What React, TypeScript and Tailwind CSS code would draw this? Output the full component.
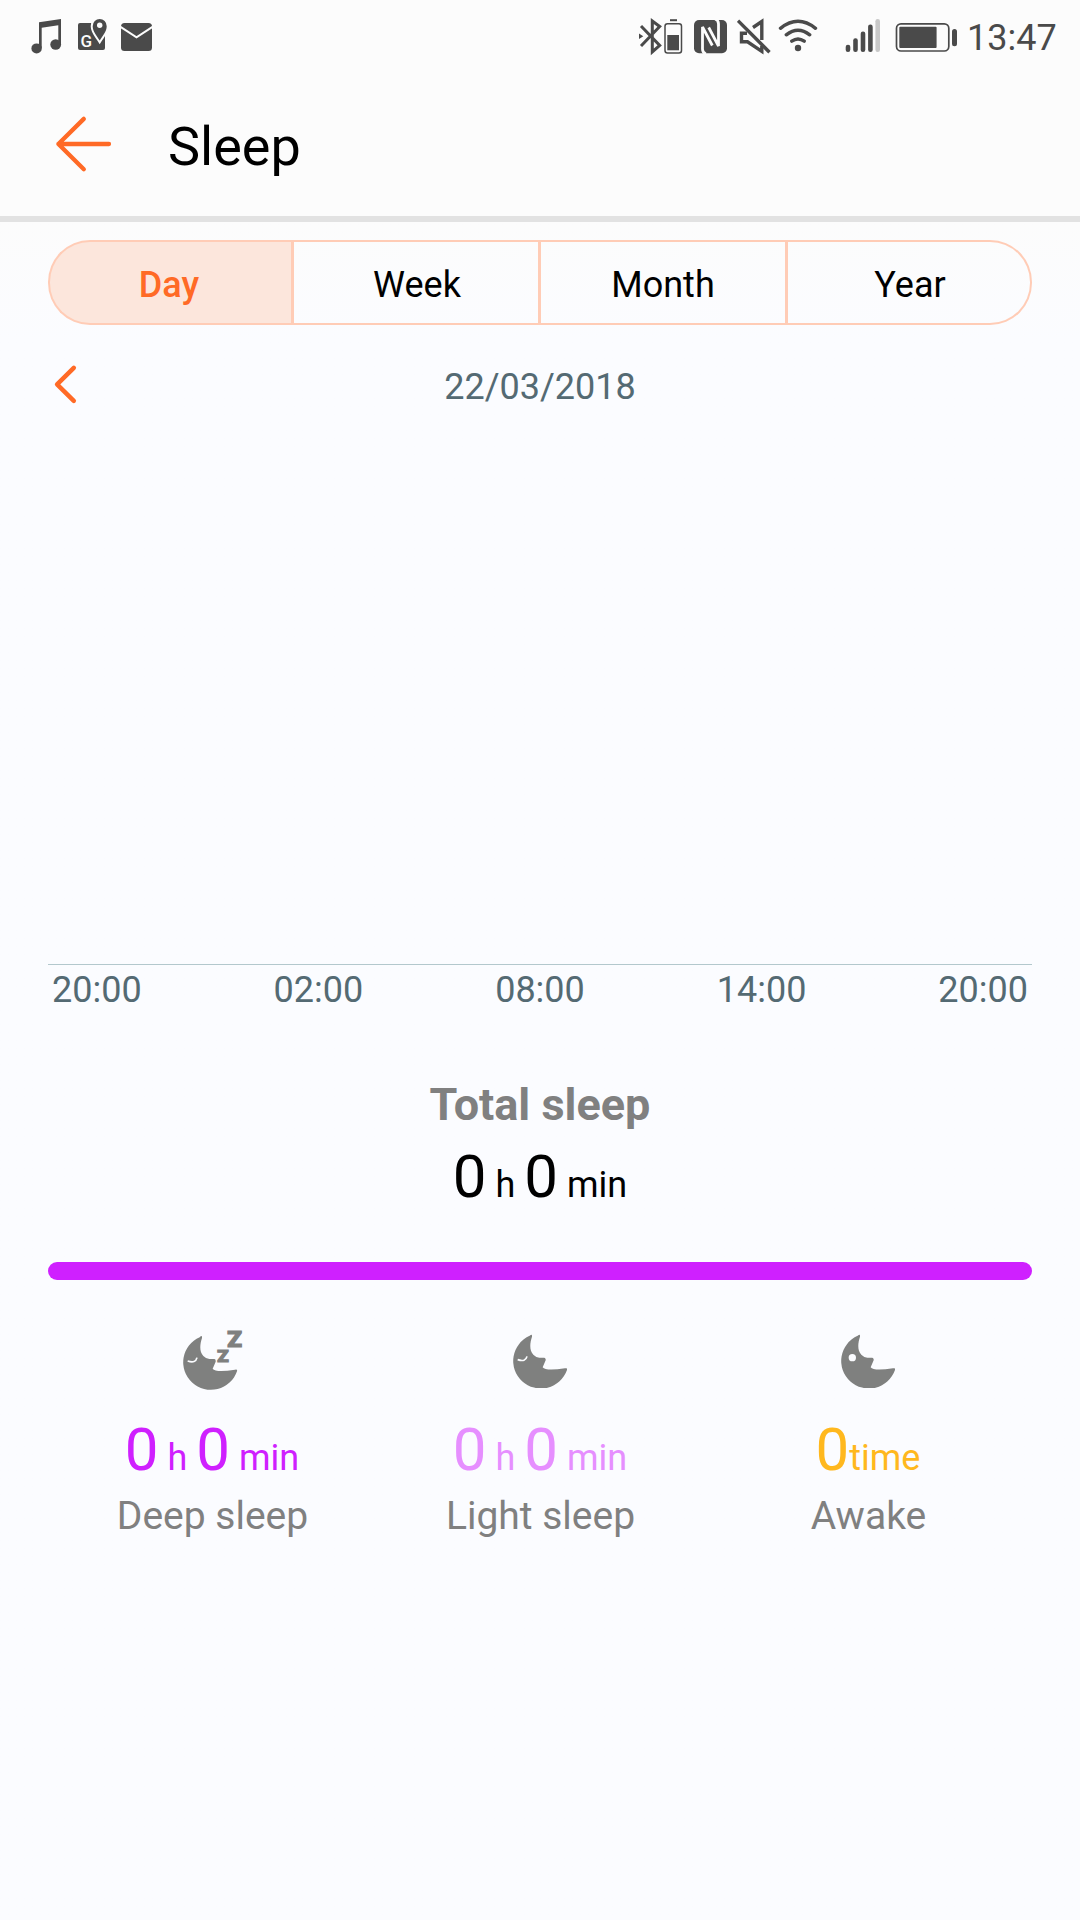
import type { ReactNode } from 'react'
import clsx from 'clsx'

const tabs = ['Day', 'Week', 'Month', 'Year']
const hours = ['20:00', '02:00', '08:00', '14:00', '20:00']

function MusicIcon() {
  return (
    <svg width="34" height="43" viewBox="30 16 34 43" fill="#4a4a4a">
      <path d="M39 22.3 61 19v26h-2.7V25.2L41.7 27.7V48H39z" />
      <ellipse cx="36.6" cy="48.4" rx="5.2" ry="5" />
      <ellipse cx="55.7" cy="44.5" rx="5.4" ry="5.2" />
    </svg>
  )
}

function MapsIcon() {
  return (
    <svg width="32" height="43" viewBox="76 16 32 43" fill="#4a4a4a">
      <rect x="78" y="23" width="27" height="27" rx="2" />
      <path
        d="M99.7 40.5c-2.6-4.3-7-8.8-7-14.3a7 7.2 0 0 1 14 0c0 5.5-4.4 10-7 14.3z"
        stroke="#fcfcfc"
        strokeWidth="4"
        paintOrder="stroke"
      />
      <circle cx="99.7" cy="25.3" r="2.7" fill="#fcfcfc" />
      <text x="80.5" y="47" fontSize="17" fontWeight="500" fill="#fcfcfc" fontFamily="Roboto, sans-serif">
        G
      </text>
    </svg>
  )
}

function MailIcon() {
  return (
    <svg width="34" height="43" viewBox="120 16 34 43">
      <rect x="121" y="23" width="31" height="28" rx="3.5" fill="#4a4a4a" />
      <path d="m120.5 26.8 16 10.5 16-10.5" fill="none" stroke="#fcfcfc" strokeWidth="2" />
    </svg>
  )
}

function BluetoothIcon() {
  return (
    <svg width="49" height="43" viewBox="638 16 49 43" fill="none" stroke="#4a4a4a" strokeWidth="3">
      <path d="m641 26 18.700 19.500-7.400 6.500V21l7.400 5.500L641 46" />
      <path d="m639 33.500 4.300 2.800-4.300 2.700z" fill="#4a4a4a" stroke="none" />
      <rect x="665" y="23.7" width="16.5" height="29.3" rx="2.5" strokeWidth="1.5" />
      <path d="M670 20.200h7" strokeWidth="2" />
      <path d="M667.300 35H679v15.300h-11.700z" fill="#4a4a4a" stroke="none" />
    </svg>
  )
}

function NfcIcon() {
  return (
    <svg width="38" height="43" viewBox="693 16 38 43">
      <rect x="694" y="20" width="33" height="33.3" rx="5" fill="#4a4a4a" />
      <path
        d="M706 54q-3.500-1-3.500-5V27l9.800 18.500M715 19q3.500 1 3.500 5v22l-9.800-18.500"
        fill="none"
        stroke="#fcfcfc"
        strokeWidth="2.8"
      />
    </svg>
  )
}

function MuteIcon() {
  return (
    <svg width="34" height="43" viewBox="737 16 34 43" fill="none" stroke="#4a4a4a" strokeWidth="3.4">
      <path d="m738 20.700 31.500 31.600" />
      <path d="M747 33.300h-5.500v8.500h6l14.300 9.500V46M753 27.500l8.800-6v18.500" />
    </svg>
  )
}

function WifiIcon() {
  return (
    <svg width="42" height="43" viewBox="777 16 42 43" fill="none" stroke="#4a4a4a" strokeWidth="3.4" strokeLinecap="round">
      <path d="M780.500 28.300q17.500-14 35 0M786.300 34.800q11.700-9.300 23.400 0M791.800 41.200q6.200-4.600 12.400 0" />
      <circle cx="798" cy="48" r="3.2" fill="#4a4a4a" stroke="none" />
    </svg>
  )
}

function SignalIcon() {
  return (
    <svg width="36" height="43" viewBox="845 16 36 43" fill="#4a4a4a">
      <rect x="845.7" y="44.7" width="4.6" height="7.3" rx="2.2" />
      <rect x="853.2" y="38.3" width="4.6" height="13.7" rx="2.2" />
      <rect x="860.7" y="31.5" width="4.6" height="20.5" rx="2.2" />
      <rect x="868.1" y="24.5" width="4.6" height="27.5" rx="2.2" />
      <rect x="875.4" y="19" width="4.6" height="33" rx="2.2" fill="#c8c8c8" />
    </svg>
  )
}

function BatteryIcon() {
  return (
    <svg width="64" height="43" viewBox="895 16 64 43" fill="#4a4a4a">
      <rect x="896.5" y="23.8" width="52.3" height="27.2" rx="4.5" fill="none" stroke="#4a4a4a" strokeWidth="1.7" />
      <rect x="899.3" y="26.7" width="37.3" height="21.3" rx="1" />
      <rect x="952" y="29" width="5" height="17.3" rx="2.5" />
    </svg>
  )
}

const MOON =
  'M50 5.500Q58-2 57 8C51 26 48 48 61 62Q70 71 79 71L94 71Q99 72 98 79L89 100Q98 112 156 103Q164 101 162 108A83 82.500 0 1 1 50 5.500Z'

function Moon({ face }: { face: 'deep' | 'light' | 'awake' }) {
  const deep = face === 'deep'
  return (
    <svg
      className={clsx('shrink-0', deep && 'ml-0.5')}
      width={deep ? 60 : 54}
      height={deep ? 70 : 54.67}
      viewBox={deep ? '0 -28 180 210' : '0 0 162 164'}
      fill="#7f807f"
    >
      <path d={MOON} />
      {face === 'awake' ? (
        <circle cx="34" cy="71" r="11" fill="#fbfcff" />
      ) : (
        <path d="M14 77Q38 85 42 67" fill="none" stroke="#fbfcff" strokeWidth="5" />
      )}
      {deep && (
        <g fontFamily="Roboto, sans-serif" fontWeight="900" stroke="#7f807f" strokeWidth="3.5">
          <text x="133" y="36" fontSize="64" textLength="44" lengthAdjust="spacingAndGlyphs">Z</text>
          <text x="103" y="79" fontSize="48" textLength="34" lengthAdjust="spacingAndGlyphs">Z</text>
        </g>
      )}
    </svg>
  )
}

function Duration({ className }: { className?: string }) {
  return (
    <p className={clsx('whitespace-pre text-4xl leading-[42px]', className)}>
      <span className="text-6xl leading-[70px]">0</span> h <span className="text-6xl leading-[70px]">0</span> min
    </p>
  )
}

function Stat({ icon, value, label }: { icon: ReactNode; value: ReactNode; label: string }) {
  return (
    <div className="flex flex-col items-center">
      <div className="flex h-[60px] items-center">{icon}</div>
      <div className="mt-6 h-[70px]">{value}</div>
      <p className="mt-[7px] pl-px text-[39px] leading-[48px] text-[#808080]">{label}</p>
    </div>
  )
}

export default function App() {
  return (
    <div className="flex h-[1920px] w-[1080px] flex-col overflow-hidden bg-[#fbfcff] font-['Roboto',sans-serif] text-black">
      <header className="flex h-[222px] flex-col border-b-[6px] border-[#e2e2e2] bg-[#fcfcfc]">
        <div className="flex h-[75px] items-center pl-[30px] text-[#4a4a4a]">
          <div className="flex gap-3">
            <MusicIcon />
            <MapsIcon />
            <MailIcon />
          </div>
          <div className="ml-[484px] flex items-center gap-1.5">
            <BluetoothIcon />
            <NfcIcon />
            <MuteIcon />
            <WifiIcon />
          </div>
          <div className="ml-[26px] flex items-center gap-3.5">
            <SignalIcon />
            <BatteryIcon />
          </div>
          <span className="ml-2 text-4xl leading-none">13:47</span>
        </div>
        <div className="flex flex-1 items-center pb-[3px] pl-[54px]">
          <svg width="60" height="60" viewBox="0 0 60 60" fill="none" stroke="#ff6a26" strokeWidth="4.3" strokeLinecap="round" strokeLinejoin="round">
            <path d="M55 30H4.400M29.800 4.900 4.400 30l25.400 25.200" />
          </svg>
          <h1 className="ml-[54px] mt-1.5 text-[54px] leading-[64px]">Sleep</h1>
        </div>
      </header>

      <main className="flex flex-1 flex-col bg-linear-to-b from-[#fcfcfc] to-[#fbfcff] to-[120px] px-12">
        <div className="mt-[18px] grid h-[85px] grid-cols-[243px_3px_244px_3px_244px_3px_244px]">
          {tabs.map((tab, i) => (
            <div key={tab} className="contents">
              {i > 0 && <span className="bg-[#ffccb6]" />}
              <button
                className={clsx(
                  'border-y-2 border-[#ffccb6] pt-1 text-4xl leading-none',
                  i === 0 && 'rounded-l-[42px] border-l-2 bg-[#fce6dc] pr-[3px] font-medium text-[#ff6a26]',
                  i === 1 && 'pl-0.5',
                  i === tabs.length - 1 && 'rounded-r-[42px] border-r-2 pl-0.5',
                )}
              >
                {tab}
              </button>
            </div>
          ))}
        </div>

        <div className="mt-[35px] grid h-[50px] grid-cols-[1fr_auto_1fr] items-center">
          <svg className="ml-1" width="26" height="42" viewBox="0 0 26 42" fill="none" stroke="#ff6a26" strokeWidth="4.5" strokeLinecap="round" strokeLinejoin="round">
            <path d="M21.800 3.900 5.100 20.400l16.700 16.400" />
          </svg>
          <span className="pt-1 text-4xl leading-none text-[#546a73]">22/03/2018</span>
        </div>

        <div className="mt-[554px] h-px bg-[#b3c8cd]" />
        <div className="flex justify-between px-1 pt-1 text-4xl leading-[42px] text-[#546a73]">
          {hours.map((h, i) => (
            <span key={i}>{h}</span>
          ))}
        </div>

        <section className="mt-[67px] flex flex-col items-center">
          <h2 className="text-[45px] font-bold leading-[54px] text-[#808080]">Total sleep</h2>
          <Duration className="mt-2.5" />
        </section>

        <div className="mt-[50px] h-[18px] rounded-full bg-[#cf20ff]" />

        <div className="mt-[51px] grid grid-cols-3">
          <Stat icon={<Moon face="deep" />} value={<Duration className="text-[#cf20ff]" />} label="Deep sleep" />
          <Stat icon={<Moon face="light" />} value={<Duration className="text-[#e68fff]" />} label="Light sleep" />
          <Stat
            icon={<Moon face="awake" />}
            value={
              <p className="text-4xl leading-[42px] text-[#ffb81e]">
                <span className="text-6xl leading-[70px]">0</span>time
              </p>
            }
            label="Awake"
          />
        </div>
      </main>
    </div>
  )
}
